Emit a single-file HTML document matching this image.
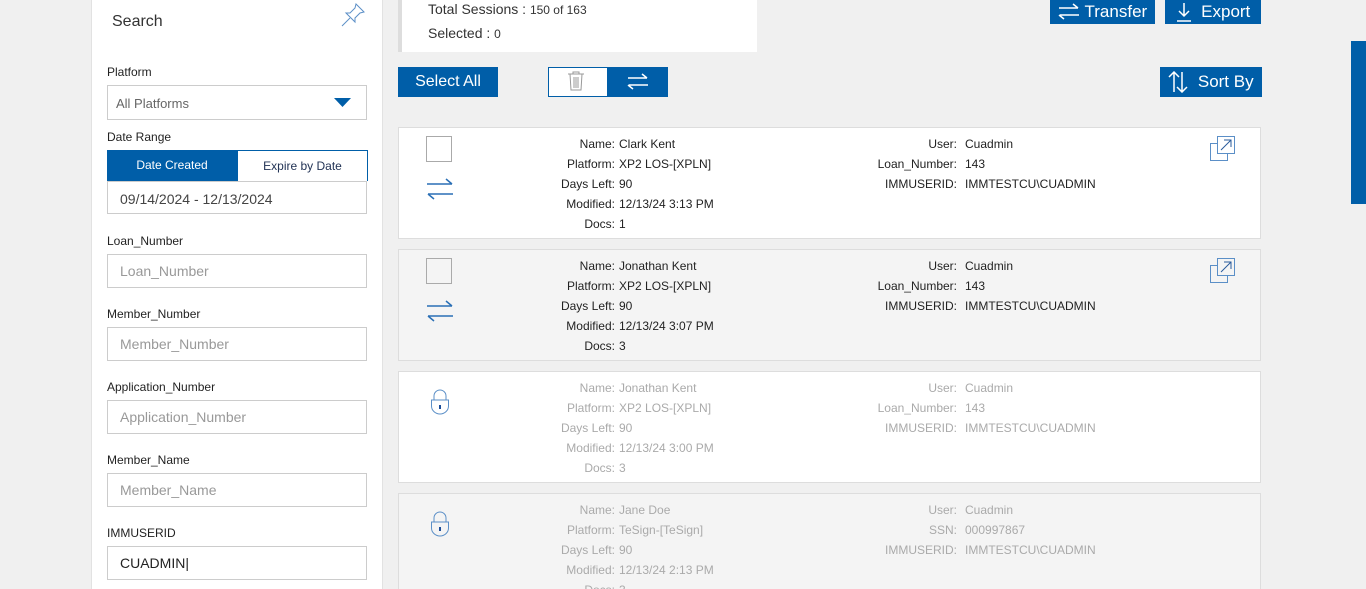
<!DOCTYPE html>
<html style="width:1366px;height:589px;overflow:hidden"><head><meta charset="utf-8"><style>
*{box-sizing:border-box;margin:0;padding:0}
body{width:1366px;height:589px;overflow:hidden;background:#f0f0f0;font-family:"Liberation Sans",Arial,sans-serif;color:#222;position:relative}
.abs{position:absolute}
.side{left:91px;top:0;width:292px;height:589px;background:#fff;border-left:1px solid #e2e2e2;border-right:1px solid #e2e2e2}
.lbl{position:absolute;left:15px;font-size:12px;color:#222}
.inp{position:absolute;left:15px;width:260px;height:34px;border:1px solid #ccc;font-size:14px;color:#999;padding:8px 12px}
.btn{position:absolute;background:#005ea8;color:#fff;font-size:17px;display:flex;align-items:center;justify-content:center}
.card{position:absolute;left:398px;width:863px;height:112px;border:1px solid #ddd;font-size:12px;line-height:20px;overflow:hidden}
.card .l{position:absolute;top:6px;width:216px;text-align:right;left:0}
.card .v{position:absolute;top:6px;left:220px;white-space:pre}
.card .l2{position:absolute;top:6px;left:400px;width:158px;text-align:right}
.card .v2{position:absolute;top:6px;left:566px;white-space:pre}
.dim{color:#aaa}
.cb{position:absolute;left:27px;top:8px;width:26px;height:26px;border:1px solid #aaa;background:#fff}
</style></head><body>
<div class="abs side">
 <div class="abs" style="left:20px;top:13px;font-size:16px;color:#333">Search</div>
 <svg class="abs" style="left:248px;top:2px" width="26" height="26" viewBox="0 0 26 26" fill="none" stroke="#5b8fc7" stroke-width="1"><path d="M16 2 L24 10 L20 11 L15 16 L15 20 L6 11 L10 11 L15 6 Z"/><path d="M10 16 L2 24"/></svg>
 <div class="lbl" style="top:65px">Platform</div>
 <div class="inp" style="top:85px;height:35px;color:#666;font-size:13px;padding-top:10px;padding-left:8px">All Platforms</div>
 <svg class="abs" style="left:242px;top:98px" width="18" height="10"><path d="M0 0 L17 0 L8.5 9 Z" fill="#005ea8"/></svg>
 <div class="lbl" style="top:130px">Date Range</div>
 <div class="abs" style="left:15px;top:150px;width:130px;height:31px;background:#005ea8;color:#fff;font-size:12px;text-align:center;line-height:31px">Date Created</div>
 <div class="abs" style="left:145px;top:150px;width:131px;height:31px;border:1px solid #005ea8;border-bottom:none;color:#235;font-size:12px;text-align:center;line-height:31px">Expire by Date</div>
 <div class="inp" style="top:181px;height:33px;color:#444;font-size:14px;padding-top:9px">09/14/2024 - 12/13/2024</div>
 <div class="lbl" style="top:234px">Loan_Number</div>
 <div class="inp" style="top:254px">Loan_Number</div>
 <div class="lbl" style="top:307px">Member_Number</div>
 <div class="inp" style="top:327px">Member_Number</div>
 <div class="lbl" style="top:380px">Application_Number</div>
 <div class="inp" style="top:400px">Application_Number</div>
 <div class="lbl" style="top:453px">Member_Name</div>
 <div class="inp" style="top:473px">Member_Name</div>
 <div class="lbl" style="top:526px">IMMUSERID</div>
 <div class="inp" style="top:546px;color:#222">CUADMIN|</div>
</div>
<div class="abs" style="left:398px;top:0;width:359px;height:52px;background:#fff;border-left:4px solid #ddd;font-size:14px;color:#333">
 <div class="abs" style="left:26px;top:1px">Total Sessions : <span style="font-size:12px">150 of 163</span></div>
 <div class="abs" style="left:26px;top:25px">Selected : <span style="font-size:12px">0</span></div>
</div>
<div class="btn" style="left:1050px;top:0;width:105px;height:24px"><svg width="22" height="18" fill="none" stroke="#fff" stroke-width="1.5"><path d="M1 5h19M15 1l5 4M21 12H2M6 16l-5-4"/></svg>&nbsp;Transfer</div>
<div class="btn" style="left:1165px;top:0;width:96px;height:24px"><svg width="16" height="20" fill="none" stroke="#fff" stroke-width="1.5"><path d="M8 1v13M3 9l5 5 5-5M1 19h14"/></svg>&nbsp;&nbsp;Export</div>
<div class="btn" style="left:398px;top:67px;width:100px;height:30px;font-size:16px">Select All</div>
<div class="abs" style="left:548px;top:67px;width:120px;height:30px;border:1px solid #005ea8;background:#fff"></div>
<div class="btn" style="left:607px;top:67px;width:61px;height:30px"><svg width="22" height="18" fill="none" stroke="#fff" stroke-width="1.5"><path d="M1 5h19M15 1l5 4M21 12H2M6 16l-5-4"/></svg></div>
<svg class="abs" style="left:566px;top:70px" width="20" height="22" viewBox="0 0 20 22" fill="none" stroke="#999"><path d="M2 4h16M7 4V2h6v2M4 4l1 16h10l1-16M8 7v11M10 7v11M12 7v11"/></svg>
<div class="btn" style="left:1160px;top:67px;width:102px;height:30px"><svg width="20" height="22" fill="none" stroke="#fff" stroke-width="1.5"><path d="M6 21V1M1 6l5-5 5 5M14 1v20M9 16l5 5 5-5"/></svg>&nbsp;&nbsp;Sort By</div>
<div class="abs" style="left:1351px;top:41px;width:15px;height:163px;background:#005ea8"></div>

<div class="card" style="top:127px;background:#fff">
 <div class="cb"></div>
 <svg class="abs" style="left:27px;top:50px" width="28" height="22" fill="none" stroke="#2a6fb5" stroke-width="1.5"><path d="M1 6h25M20 1l6 5M27 16H2M8 21l-6-5"/></svg>
 <div class="l">Name:<br>Platform:<br>Days Left:<br>Modified:<br>Docs:</div>
 <div class="v">Clark Kent
XP2 LOS-[XPLN]
90
12/13/24 3:13 PM
1</div>
 <div class="l2">User:<br>Loan_Number:<br>IMMUSERID:</div>
 <div class="v2">Cuadmin
143
IMMTESTCU\CUADMIN</div>
 <svg class="abs" style="left:810px;top:7px" width="28" height="28" fill="none" stroke="#5b8fc7"><rect x="1.5" y="8.5" width="17" height="17"/><rect x="8.5" y="1.5" width="17" height="17" fill="#fff"/><path d="M12 15l10-10M15 5h7v7" stroke="#2a5b9b"/></svg>
</div>
<div class="card" style="top:249px;background:#f4f4f4">
 <div class="cb" style="background:#f4f4f4"></div>
 <svg class="abs" style="left:27px;top:50px" width="28" height="22" fill="none" stroke="#2a6fb5" stroke-width="1.5"><path d="M1 6h25M20 1l6 5M27 16H2M8 21l-6-5"/></svg>
 <div class="l">Name:<br>Platform:<br>Days Left:<br>Modified:<br>Docs:</div>
 <div class="v">Jonathan Kent
XP2 LOS-[XPLN]
90
12/13/24 3:07 PM
3</div>
 <div class="l2">User:<br>Loan_Number:<br>IMMUSERID:</div>
 <div class="v2">Cuadmin
143
IMMTESTCU\CUADMIN</div>
 <svg class="abs" style="left:810px;top:7px" width="28" height="28" fill="none" stroke="#5b8fc7"><rect x="1.5" y="8.5" width="17" height="17"/><rect x="8.5" y="1.5" width="17" height="17" fill="#f4f4f4"/><path d="M12 15l10-10M15 5h7v7" stroke="#2a5b9b"/></svg>
</div>
<div class="card dim" style="top:371px;background:#fff">
 <svg class="abs" style="left:31px;top:16px" width="20" height="27" fill="none" stroke="#5b8fc7"><path d="M4 12V8a6 6 0 0112 0v4"/><path d="M1.5 12h17v6a8.5 8 0 01-17 0z"/><rect x="9" y="17" width="2" height="4" fill="#1d4e9b" stroke="none"/></svg>
 <div class="l">Name:<br>Platform:<br>Days Left:<br>Modified:<br>Docs:</div>
 <div class="v">Jonathan Kent
XP2 LOS-[XPLN]
90
12/13/24 3:00 PM
3</div>
 <div class="l2">User:<br>Loan_Number:<br>IMMUSERID:</div>
 <div class="v2">Cuadmin
143
IMMTESTCU\CUADMIN</div>
</div>
<div class="card dim" style="top:493px;height:96px;border-bottom:none;background:#f4f4f4">
 <svg class="abs" style="left:31px;top:16px" width="20" height="27" fill="none" stroke="#5b8fc7"><path d="M4 12V8a6 6 0 0112 0v4"/><path d="M1.5 12h17v6a8.5 8 0 01-17 0z"/><rect x="9" y="17" width="2" height="4" fill="#1d4e9b" stroke="none"/></svg>
 <div class="l">Name:<br>Platform:<br>Days Left:<br>Modified:<br>Docs:</div>
 <div class="v">Jane Doe
TeSign-[TeSign]
90
12/13/24 2:13 PM
3</div>
 <div class="l2">User:<br>SSN:<br>IMMUSERID:</div>
 <div class="v2">Cuadmin
000997867
IMMTESTCU\CUADMIN</div>
</div>
</body></html>
